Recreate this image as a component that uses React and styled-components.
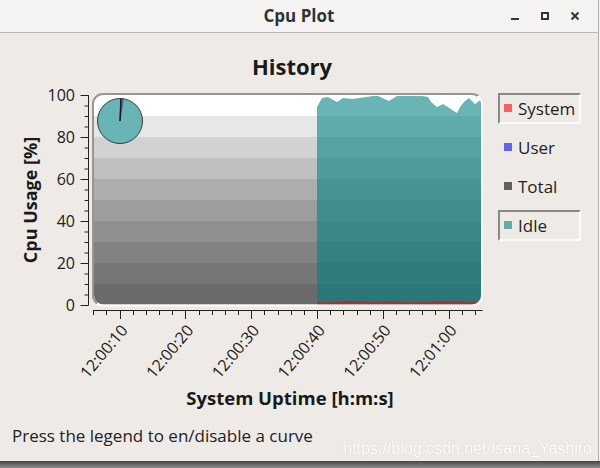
import React from "react";
import styled, { createGlobalStyle } from "styled-components";

const GlobalStyle = createGlobalStyle`
  html, body {
    margin: 0;
    padding: 0;
  }
  body {
    width: 600px;
    height: 468px;
    overflow: hidden;
    background: linear-gradient(to bottom, #f4f3f2 0 461px, #454545 461px, #8e8e8e 468px);
    font-family: "Open Sans", "DejaVu Sans", sans-serif;
  }
`;

const Window = styled.div`
  width: 599px;
  height: 461px;
  box-sizing: border-box;
  background: #eeebe7;
  border-right: 1px solid #b4b1ac;
  display: flex;
  flex-direction: column;
  position: relative;
`;

const TitleBar = styled.div`
  flex: none;
  height: 33px;
  box-sizing: border-box;
  display: grid;
  grid-template-columns: 1fr auto 1fr;
  align-items: center;
  background: #f4f3f2;
  border-bottom: 1px solid #bab7b2;
`;

const WindowTitle = styled.div`
  grid-column: 2;
  font-size: 17px;
  font-weight: 700;
  color: #2e3436;
  line-height: 32px;
`;

const Controls = styled.div`
  grid-column: 3;
  justify-self: end;
  display: flex;
  margin-right: 8px;
`;

const ControlButton = styled.div`
  width: 30px;
  height: 32px;
  display: flex;
  align-items: center;
  justify-content: center;
  color: #2e3436;
`;

const Body = styled.div`
  flex: 1;
  display: flex;
  flex-direction: column;
`;

const PlotTitle = styled.div`
  margin: 18px 0 0 92px;
  width: 400px;
  text-align: center;
  font-size: 22px;
  font-weight: 700;
  line-height: 30px;
  color: #1a1a1a;
`;

const PlotRow = styled.div`
  display: flex;
  align-items: flex-start;
`;

const Chart = styled.svg`
  display: block;
  flex: none;
  font-family: "Open Sans", "DejaVu Sans", sans-serif;
`;

const Legend = styled.div`
  margin: 12px 0 0 8px;
  display: flex;
  flex-direction: column;
  gap: 8px;
`;

const LegendItem = styled.button`
  width: 83px;
  height: 31px;
  box-sizing: border-box;
  display: flex;
  align-items: center;
  gap: 6px;
  padding: 0 0 1px 4px;
  margin: 0;
  border: 2px solid;
  border-color: ${(p) =>
    p.$on ? "#8c8985 #fbfbfa #fbfbfa #8c8985" : "transparent"};
  background: transparent;
  font-family: "Open Sans", "DejaVu Sans", sans-serif;
  font-size: 17px;
  color: #1f1f1f;
  cursor: pointer;
`;

const Swatch = styled.span`
  width: 8px;
  height: 8px;
  flex: none;
  background: ${(p) => p.$color};
`;

const Status = styled.div`
  margin: 11px 0 0 12px;
  font-size: 17px;
  line-height: 20px;
  color: #222;
`;

const Watermark = styled.div`
  position: absolute;
  right: 6px;
  top: 439px;
  font-family: "Liberation Sans", Arial, sans-serif;
  font-size: 16px;
  line-height: 20px;
  color: #ffffff;
  text-shadow: 0 0 1px rgba(0, 0, 0, 0.18);
`;

// scales of the plot, in page pixels
const yPx = (v) => 305 - v * 2.1;
const xPx = (t) => 93.3 + (t - 6) * 6.58;

const bandGrays = [107, 118, 130, 143, 157, 173, 191, 210, 231, 255];

const idlePoints = [
  [317, 107], [322, 98], [328, 97], [337, 102], [343, 98], [352, 99],
  [373, 96], [378, 96], [389, 101], [397, 96], [410, 96], [422, 96],
  [428, 97], [431, 102], [437, 107], [443, 104], [457, 113], [460, 107],
  [465, 101], [469, 98], [475, 104], [482, 99],
];

const systemPoints = [
  [317, 301.6], [325, 302.2], [335, 302], [345, 301.2], [350, 300.4],
  [355, 301.5], [370, 301.8], [385, 301.5], [392, 301.2], [400, 302],
  [410, 302.2], [420, 301.9], [430, 301.7], [440, 301.4], [445, 300.7],
  [452, 301.2], [458, 300.5], [463, 301.4], [470, 302], [482, 301.8],
];

const areaPath = (pts) =>
  `M${pts[0][0]},305 ` + pts.map(([x, y]) => `L${x},${y}`).join(" ") + ` L${pts[pts.length - 1][0]},305 Z`;

const yTicks = Array.from({ length: 21 }, (_, i) => i * 5);
const xTicks = Array.from({ length: 30 }, (_, i) => 6 + i * 2);
const xLabels = ["12:00:10", "12:00:20", "12:00:30", "12:00:40", "12:00:50", "12:01:00"];

const CpuChart = () => (
  <Chart width="490" height="334" viewBox="0 81 490 334">
    <defs>
      <clipPath id="canvasClip">
        <rect x="94" y="95" width="388" height="209.5" rx="9" />
      </clipPath>
      <linearGradient id="frameGrad" x1="0" y1="0" x2="1" y2="1">
        <stop offset="0.5" stopColor="#9a9792" />
        <stop offset="0.5" stopColor="#fbfbfa" />
      </linearGradient>
    </defs>

    {/* canvas */}
    <g clipPath="url(#canvasClip)">
      {bandGrays.map((g, i) => (
        <rect key={i} x="94" y={yPx((i + 1) * 10)} width="388" height="21" fill={`rgb(${g},${g},${g})`} />
      ))}
      <path d={areaPath(idlePoints)} fill="rgba(0,128,128,0.59)" />
      <path d={areaPath(systemPoints)} fill="rgba(255,0,0,0.59)" />
    </g>
    <rect x="93" y="94" width="389" height="211.5" rx="10" fill="none" stroke="url(#frameGrad)" strokeWidth="2" />

    {/* pie marker */}
    <circle cx="120" cy="121" r="22.5" fill="#69b4b4" stroke="#3a3a3a" strokeWidth="1" />
    <path d="M120,121 L121.2,98.5 A22.5,22.5 0 0,1 123.4,98.7 Z" fill="#6a6aff" stroke="#3a3a3a" strokeWidth="0.6" />
    <line x1="120" y1="121" x2="120.9" y2="98.5" stroke="#111" strokeWidth="1.3" />

    {/* y axis */}
    <line x1="88.5" y1="95" x2="88.5" y2="305.5" stroke="#222" />
    {yTicks.map((v) => (
      <line key={v} x1={v % 20 === 0 ? 80.5 : 84.5} y1={yPx(v) + 0.5} x2="88.5" y2={yPx(v) + 0.5} stroke="#222" />
    ))}
    {[0, 20, 40, 60, 80, 100].map((v) => (
      <text key={v} x="75" y={yPx(v)} dy="0.36em" textAnchor="end" fontSize="16" fill="#1b1b1b">
        {v}
      </text>
    ))}
    <text transform="translate(36.5,200) rotate(-90)" textAnchor="middle" fontSize="18" fontWeight="700" fill="#1a1a1a">
      Cpu Usage [%]
    </text>

    {/* x axis */}
    <line x1="93" y1="310.5" x2="482.5" y2="310.5" stroke="#222" />
    {xTicks.map((t) => (
      <line key={t} x1={Math.round(xPx(t)) + 0.5} y1="310.5" x2={Math.round(xPx(t)) + 0.5} y2={t % 10 === 0 ? 319 : 315} stroke="#222" />
    ))}
    {xLabels.map((label, i) => (
      <text
        key={label}
        transform={`translate(${xPx(10 + i * 10) + 4.5},327) rotate(-50)`}
        dy="0.36em"
        textAnchor="end"
        fontSize="16"
        fill="#1b1b1b"
      >
        {label}
      </text>
    ))}
    <text x="290" y="405" textAnchor="middle" fontSize="18.5" fontWeight="700" fill="#1a1a1a">
      System Uptime [h:m:s]
    </text>
  </Chart>
);

const legendItems = [
  { name: "System", color: "#f8605f", on: true },
  { name: "User", color: "#6260f5", on: false },
  { name: "Total", color: "#62605f", on: false },
  { name: "Idle", color: "#62acaa", on: true },
];

const App = () => (
  <>
    <GlobalStyle />
    <Window>
      <TitleBar>
        <WindowTitle>Cpu Plot</WindowTitle>
        <Controls>
          <ControlButton>
            <svg width="10" height="10" viewBox="0 0 10 10">
              <rect x="1" y="7" width="8" height="2" fill="currentColor" />
            </svg>
          </ControlButton>
          <ControlButton>
            <svg width="10" height="10" viewBox="0 0 10 10">
              <rect x="2" y="2" width="6" height="6" fill="none" stroke="currentColor" strokeWidth="2" />
            </svg>
          </ControlButton>
          <ControlButton>
            <svg width="10" height="10" viewBox="0 0 10 10">
              <path d="M1.5,1.5 L8.5,8.5 M8.5,1.5 L1.5,8.5" stroke="currentColor" strokeWidth="2" />
            </svg>
          </ControlButton>
        </Controls>
      </TitleBar>
      <Body>
        <PlotTitle>History</PlotTitle>
        <PlotRow>
          <CpuChart />
          <Legend>
            {legendItems.map((item) => (
              <LegendItem key={item.name} $on={item.on}>
                <Swatch $color={item.color} />
                {item.name}
              </LegendItem>
            ))}
          </Legend>
        </PlotRow>
        <Status>Press the legend to en/disable a curve</Status>
      </Body>
      <Watermark>https://blog.csdn.net/Isana_Yashiro</Watermark>
    </Window>
  </>
);

export default App;
